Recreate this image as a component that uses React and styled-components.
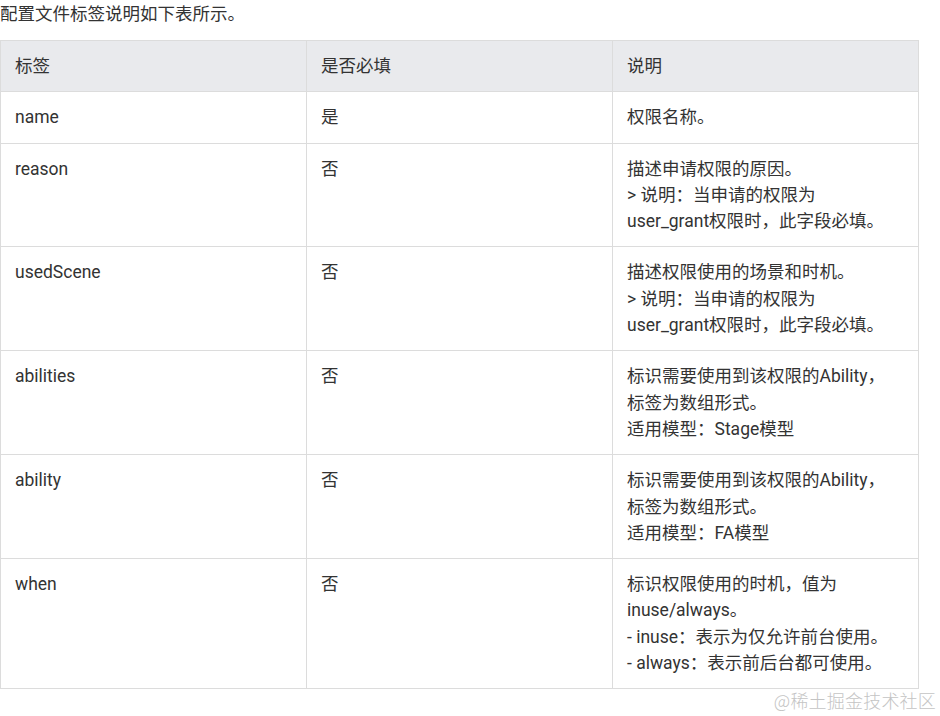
import React from "react";
import styled, { createGlobalStyle } from "styled-components";

const Global = createGlobalStyle`
  html, body { margin: 0; padding: 0; background: #fff; }
  body {
    font-family: Roboto, "Noto Sans CJK SC", "Noto Sans", sans-serif;
    color: #333;
  }
`;

const Page = styled.div`
  position: relative;
  width: 940px;
  height: 716px;
  overflow: hidden;
`;

const Intro = styled.p`
  margin: 0 0 12px 0;
  font-size: 17.5px;
  line-height: 28px;
  color: #333;
`;

const Table = styled.table`
  width: 919px;
  border-collapse: collapse;
  table-layout: fixed;
  font-size: 17.5px;
  line-height: 26.3px;
`;

const Th = styled.th`
  background: #e9eaed;
  border: 1px solid #dcdcdc;
  padding: 12px 14px;
  text-align: left;
  font-weight: 400;
  color: #333;
  vertical-align: top;
`;

const Td = styled.td`
  border: 1px solid #dcdcdc;
  padding: 12px 14px;
  text-align: left;
  color: #333;
  vertical-align: top;
`;

const Line = styled.span`
  display: block;
  white-space: nowrap;
`;

const Watermark = styled.div`
  position: absolute;
  right: 4px;
  bottom: 4px;
  font-family: "Noto Sans CJK SC", sans-serif;
  font-size: 18px;
  line-height: 24px;
  color: #c4c4c4;
  font-weight: 300;
  letter-spacing: 0.2px;
`;

const rows = [
  ["name", "是", ["权限名称。"]],
  ["reason", "否", ["描述申请权限的原因。", "> 说明：当申请的权限为", "user_grant权限时，此字段必填。"]],
  ["usedScene", "否", ["描述权限使用的场景和时机。", "> 说明：当申请的权限为", "user_grant权限时，此字段必填。"]],
  ["abilities", "否", ["标识需要使用到该权限的Ability，", "标签为数组形式。", "适用模型：Stage模型"]],
  ["ability", "否", ["标识需要使用到该权限的Ability，", "标签为数组形式。", "适用模型：FA模型"]],
  ["when", "否", ["标识权限使用的时机，值为", "inuse/always。", "- inuse：表示为仅允许前台使用。", "- always：表示前后台都可使用。"]],
];

export default function App() {
  return (
    <Page>
      <Global />
      <Intro>配置文件标签说明如下表所示。</Intro>
      <Table>
        <thead>
          <tr>
            <Th>标签</Th>
            <Th>是否必填</Th>
            <Th>说明</Th>
          </tr>
        </thead>
        <tbody>
          {rows.map(([tag, req, desc]) => (
            <tr key={tag}>
              <Td>{tag}</Td>
              <Td>{req}</Td>
              <Td>
                {desc.map((l, i) => (
                  <Line key={i}>{l}</Line>
                ))}
              </Td>
            </tr>
          ))}
        </tbody>
      </Table>
      <Watermark>@稀土掘金技术社区</Watermark>
    </Page>
  );
}
